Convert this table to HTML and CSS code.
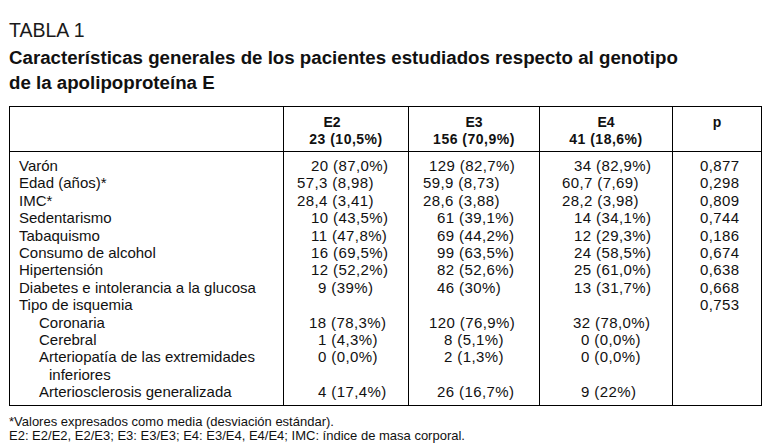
FILE: index.html
```html
<!DOCTYPE html>
<html lang="es">
<head>
<meta charset="utf-8">
<title>Tabla 1</title>
<link rel="stylesheet" href="styles.css">
</head>
<body>
<div class="page">
  <div class="caption">TABLA 1</div>
  <h1 class="title">Características generales de los pacientes estudiados respecto al genotipo<br>de la apolipoproteína E</h1>
  <table class="tbl">
    <colgroup>
      <col class="w1"><col class="w2"><col class="w3"><col class="w4"><col class="w5">
    </colgroup>
    <thead>
      <tr>
        <th class="hl"></th>
        <th class="h e2h"><span class="ht">E2</span><br><span class="hs">23 (10,5%)</span></th>
        <th class="h"><span class="ht">E3</span><br><span class="hs">156 (70,9%)</span></th>
        <th class="h"><span class="ht">E4</span><br><span class="hs">41 (18,6%)</span></th>
        <th class="h ph"><span class="ht">p</span><br><span class="hs">&nbsp;</span></th>
      </tr>
    </thead>
    <tbody>
      <tr class="first"><td class="lb">Varón</td><td class="v a2">20 (87,0%)</td><td class="v b3">129 (82,7%)</td><td class="v c2">34 (82,9%)</td><td class="v p">0,877</td></tr>
      <tr><td class="lb">Edad (años)*</td><td class="v am">57,3 (8,98)</td><td class="v bm">59,9 (8,73)</td><td class="v cm">60,7 (7,69)</td><td class="v p">0,298</td></tr>
      <tr><td class="lb">IMC*</td><td class="v am">28,4 (3,41)</td><td class="v bm">28,6 (3,88)</td><td class="v cm">28,2 (3,98)</td><td class="v p">0,809</td></tr>
      <tr><td class="lb">Sedentarismo</td><td class="v a2">10 (43,5%)</td><td class="v b2">61 (39,1%)</td><td class="v c2">14 (34,1%)</td><td class="v p">0,744</td></tr>
      <tr><td class="lb">Tabaquismo</td><td class="v a2">11 (47,8%)</td><td class="v b2">69 (44,2%)</td><td class="v c2">12 (29,3%)</td><td class="v p">0,186</td></tr>
      <tr><td class="lb">Consumo de alcohol</td><td class="v a2">16 (69,5%)</td><td class="v b2">99 (63,5%)</td><td class="v c2">24 (58,5%)</td><td class="v p">0,674</td></tr>
      <tr><td class="lb">Hipertensión</td><td class="v a2">12 (52,2%)</td><td class="v b2">82 (52,6%)</td><td class="v c2">25 (61,0%)</td><td class="v p">0,638</td></tr>
      <tr><td class="lb">Diabetes e intolerancia a la glucosa</td><td class="v a1">9 (39%)</td><td class="v b2">46 (30%)</td><td class="v c2">13 (31,7%)</td><td class="v p">0,668</td></tr>
      <tr><td class="lb">Tipo de isquemia</td><td class="v"></td><td class="v"></td><td class="v"></td><td class="v p">0,753</td></tr>
      <tr><td class="lb sub">Coronaria</td><td class="v a18">18 (78,3%)</td><td class="v b3">120 (76,9%)</td><td class="v c32">32 (78,0%)</td><td class="v p"></td></tr>
      <tr><td class="lb sub">Cerebral</td><td class="v a1">1 (4,3%)</td><td class="v b1">8 (5,1%)</td><td class="v c1">0 (0,0%)</td><td class="v p"></td></tr>
      <tr><td class="lb sub hang">Arteriopatía de las extremidades<br>inferiores</td><td class="v a1">0 (0,0%)</td><td class="v b1">2 (1,3%)</td><td class="v c1">0 (0,0%)</td><td class="v p"></td></tr>
      <tr class="last"><td class="lb sub">Arteriosclerosis generalizada</td><td class="v a1">4 (17,4%)</td><td class="v b2">26 (16,7%)</td><td class="v c1">9 (22%)</td><td class="v p"></td></tr>
    </tbody>
  </table>
  <div class="notes">
    <p>*Valores expresados como media (desviación estándar).</p>
    <p>E2: E2/E2, E2/E3; E3: E3/E3; E4: E3/E4, E4/E4; IMC: índice de masa corporal.</p>
  </div>
</div>
</body>
</html>
```

FILE: styles.css
```css
html, body {
  margin: 0;
  padding: 0;
  background: #ffffff;
}

body {
  font-family: "Liberation Sans", Arial, sans-serif;
  color: #111111;
}

.page {
  padding: 19px 12px 0 9px;
}

.caption {
  font-size: 19.5px;
  line-height: 22px;
  color: #1a1a1a;
}

.title {
  margin: 4px 0 0 0;
  font-size: 18.7px;
  line-height: 25px;
  font-weight: bold;
  color: #111111;
}

.tbl {
  margin-top: 11px;
  width: 752px;
  border-collapse: collapse;
  table-layout: fixed;
  border: 1px solid #000000;
}

.w1 { width: 274px; }
.w2 { width: 125px; }
.w3 { width: 131px; }
.w4 { width: 133px; }
.w5 { width: 89px; }

.tbl th {
  border: 1px solid #000000;
  border-top: none;
  padding: 7px 0 3px 0;
  height: 34px;
  line-height: 17px;
  font-size: 14px;
  font-weight: bold;
  text-align: center;
  vertical-align: top;
}

.ht {
  display: inline-block;
}

.hs {
  letter-spacing: 0.5px;
}

.e2h {
  padding-right: 11px;
}

.e2h .ht {
  padding-right: 28px;
}

.ph {
  padding-left: 5px;
}

.tbl td {
  padding: 0;
  font-size: 15px;
  line-height: 17.4px;
  vertical-align: top;
  border-left: 1px solid #000000;
  border-right: 1px solid #000000;
  white-space: nowrap;
}

.tbl tr.first td {
  padding-top: 5px;
}

.tbl tr.last td {
  padding-bottom: 4px;
}

.lb {
  padding-left: 9px !important;
}

.lb.sub {
  padding-left: 29px !important;
}

.lb.hang {
  padding-left: 39px !important;
  text-indent: -10px;
}

.v {
  letter-spacing: 0.4px;
}

/* E2 column */
.tbl td.am { padding-left: 13px; }
.tbl td.a2 { padding-left: 27px; }
.tbl td.a18 { padding-left: 25px; }
.tbl td.a1 { padding-left: 34px; }

/* E3 column */
.tbl td.bm { padding-left: 14px; }
.tbl td.b3 { padding-left: 20px; }
.tbl td.b2 { padding-left: 28px; }
.tbl td.b1 { padding-left: 35px; }

/* E4 column */
.tbl td.cm { padding-left: 22px; }
.tbl td.c2 { padding-left: 34px; }
.tbl td.c32 { padding-left: 33px; }
.tbl td.c1 { padding-left: 41px; }

/* p column */
.tbl td.p { padding-left: 27px; }

.notes {
  margin-top: 9px;
  font-size: 13px;
  line-height: 14.5px;
}

.notes p {
  margin: 0;
}
```
